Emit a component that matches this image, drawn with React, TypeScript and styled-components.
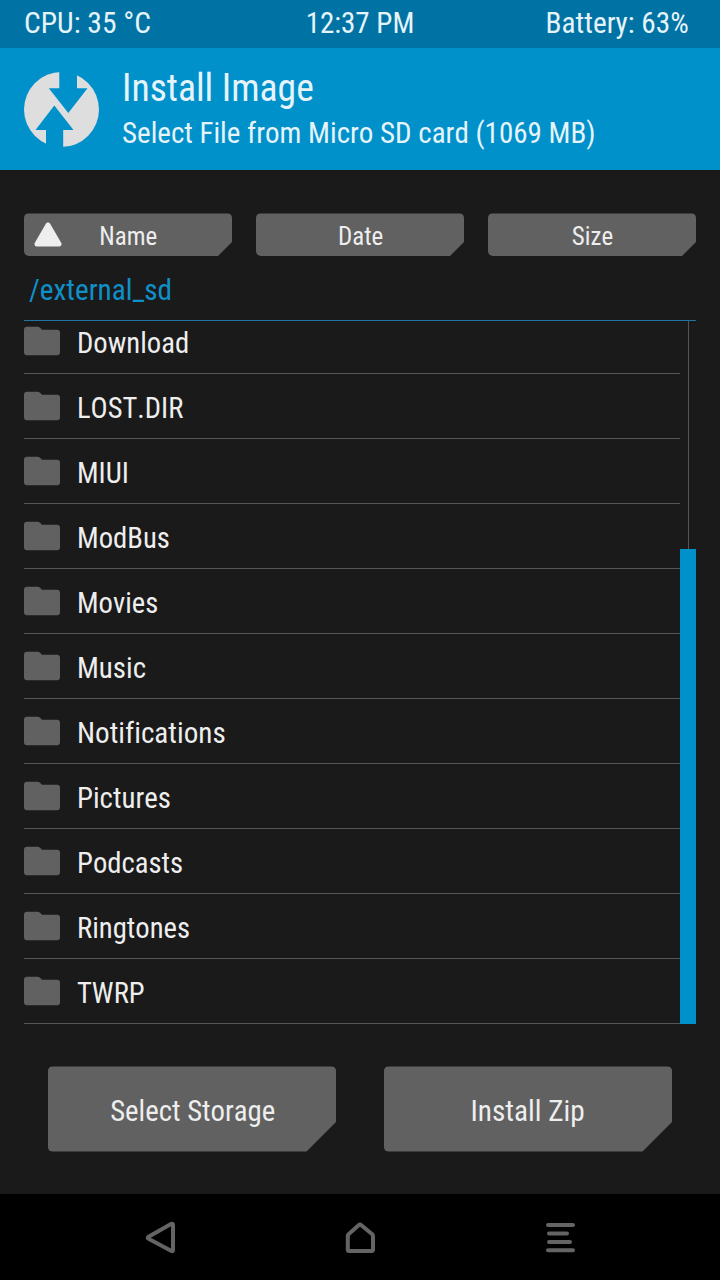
import React from "react";
import styled, { createGlobalStyle } from "styled-components";

const GlobalStyle = createGlobalStyle`
  * { box-sizing: border-box; }
  body {
    margin: 0;
    background: #1a1a1a;
    font-family: "Roboto Condensed", Roboto, "Liberation Sans", sans-serif;
    font-stretch: 75%;
    font-weight: 400;
    font-kerning: none;
    font-variant-ligatures: none;
    color: #eeeeee;
  }
`;

const Screen = styled.div`
  width: 720px;
  height: 1280px;
  display: flex;
  flex-direction: column;
  background: #1a1a1a;
  overflow: hidden;
`;

const Label = styled.span<{ $size?: number; $scale?: number; $origin?: string }>`
  display: block;
  white-space: nowrap;
  font-size: ${(p) => p.$size ?? 29}px;
  transform: scaleX(${(p) => p.$scale ?? 1});
  transform-origin: ${(p) => p.$origin ?? "left"} center;
`;

const StatusBar = styled.div`
  height: 48px;
  padding: 0 31px 2px 24px;
  display: grid;
  grid-template-columns: 1fr auto 1fr;
  align-items: center;
  background: #0073a4;
  color: #e6f4fa;
  & > :nth-child(2) { padding-left: 7px; }
  & > :last-child { justify-self: end; }
`;

const Header = styled.header`
  height: 122px;
  padding: 0 24px;
  display: flex;
  align-items: center;
  gap: 23px;
  background: #0090ca;
  color: #e6f4fa;
`;

const Logo = styled.svg`
  width: 75px;
  height: 75px;
  flex: none;
`;

const Titles = styled.div`
  display: flex;
  flex-direction: column;
  line-height: 46px;
  padding-top: 2px;
  & > :last-child { line-height: 44px; }
`;

const SortBar = styled.div`
  padding: 43px 24px 0;
  display: grid;
  grid-template-columns: repeat(3, 1fr);
  gap: 24px;
`;

const CutButton = styled.button<{ $height: number; $cut: number }>`
  position: relative;
  height: ${(p) => p.$height}px;
  padding: 4px 0 0;
  border: 0;
  border-radius: 5px;
  display: flex;
  align-items: center;
  justify-content: center;
  background: #616161;
  color: #eeeeee;
  font: inherit;
  clip-path: polygon(0 0.4px, 100% 0.4px, 100% calc(100% - ${(p) => p.$cut}px), calc(100% - ${(p) => p.$cut}px) 100%, 0 100%);
`;

const SortButton = styled(CutButton)`
  padding: 3px 0 0 1px;
`;

const SortArrow = styled.svg`
  position: absolute;
  left: 10px;
  top: 9px;
  width: 28px;
  height: 25px;
`;

const PathLine = styled.div`
  height: 65px;
  margin: 0 24px;
  padding: 1px 0 0 5px;
  border-bottom: 1px solid #1c76a0;
  color: #0f90c9;
  line-height: 66px;
`;

const FileArea = styled.div`
  height: 703px;
  margin: 0 24px;
  display: flex;
  overflow: hidden;
`;

const FileList = styled.ul`
  flex: 1;
  margin: -12px 0 0;
  padding: 0;
  list-style: none;
`;

const FileRow = styled.li`
  height: 65px;
  display: flex;
  align-items: center;
  gap: 17px;
  padding-top: 3px;
  border-bottom: 1px solid #555555;
`;

const FolderIcon = styled.svg`
  width: 36px;
  height: 30px;
  margin-bottom: 3px;
`;

const ScrollBar = styled.div`
  width: 16px;
  display: flex;
  flex-direction: column;
  align-items: center;
`;

const Track = styled.div`
  width: 1px;
  height: 228px;
  margin-left: 1px;
  background: #555555;
`;

const Thumb = styled.div`
  width: 16px;
  flex: 1;
  background: #0090ca;
`;

const Actions = styled.div`
  padding: 42px 48px 0;
  flex: 1;
  display: grid;
  grid-template-columns: 1fr 1fr;
  align-items: start;
  gap: 48px;
`;

const NavBar = styled.nav`
  height: 86px;
  padding: 0 144px;
  display: flex;
  justify-content: space-between;
  align-items: center;
  background: #000;
`;

const NavIcon = styled.svg`
  width: 32px;
  height: 36px;
  fill: none;
  stroke: #646464;
  stroke-width: 4;
  stroke-linecap: round;
  stroke-linejoin: round;
`;

const folders = [
  { name: "Download", scale: 0.988 },
  { name: "LOST.DIR", scale: 0.983 },
  { name: "MIUI", scale: 0.985 },
  { name: "ModBus", scale: 0.988 },
  { name: "Movies", scale: 0.986 },
  { name: "Music", scale: 0.997 },
  { name: "Notifications", scale: 1.005 },
  { name: "Pictures", scale: 0.995 },
  { name: "Podcasts", scale: 0.988 },
  { name: "Ringtones", scale: 0.988 },
  { name: "TWRP", scale: 0.985 },
];

export default function App() {
  return (
    <Screen>
      <GlobalStyle />
      <StatusBar>
        <Label $scale={1.018}>CPU: 35 °C</Label>
        <Label>12:37 PM</Label>
        <Label $scale={1.01} $origin="right">Battery: 63%</Label>
      </StatusBar>
      <Header>
        <Logo viewBox="24 72 75 75">
          <circle cx="61.5" cy="109.5" r="37.5" fill="#dedede" />
          <path fill="#0090ca" d="M59.3 70H77V88.3H87.5L68.3 113L48.8 88.3H59.3ZM54.3 105.5L73.5 130H63.2V149H46V130H35.5Z" />
        </Logo>
        <Titles>
          <Label $size={38} $scale={0.99}>Install Image</Label>
          <Label>Select File from Micro SD card (1069 MB)</Label>
        </Titles>
      </Header>
      <SortBar>
        {["Name", "Date", "Size"].map((name, i) => (
          <SortButton key={name} $height={43} $cut={14}>
            {i === 0 && (
              <SortArrow viewBox="0 0 28 25">
                <path d="M14 3L25 22H3Z" fill="#eee" stroke="#eee" strokeWidth="5" strokeLinejoin="round" />
              </SortArrow>
            )}
            <Label $size={26} $scale={0.96} $origin="center">{name}</Label>
          </SortButton>
        ))}
      </SortBar>
      <PathLine>
        <Label $scale={1.007}>/external_sd</Label>
      </PathLine>
      <FileArea>
        <FileList>
          {folders.map(({ name, scale }) => (
            <FileRow key={name}>
              <FolderIcon viewBox="0 0 36 30">
                <path fill="#616161" d="M3 .7H13.5Q15 .7 16 1.7L18 3.8H33Q36 3.8 36 6.8V26.3Q36 29.3 33 29.3H3Q0 29.3 0 26.3V3.7Q0 .7 3 .7Z" />
              </FolderIcon>
              <Label $scale={scale}>{name}</Label>
            </FileRow>
          ))}
        </FileList>
        <ScrollBar>
          <Track />
          <Thumb />
        </ScrollBar>
      </FileArea>
      <Actions>
        <CutButton $height={85.5} $cut={29.5}>
          <Label $scale={0.993} $origin="right">Select Storage</Label>
        </CutButton>
        <CutButton $height={85.5} $cut={29.5}>
          <Label $scale={1.01} $origin="center">Install Zip</Label>
        </CutButton>
      </Actions>
      <NavBar>
        <NavIcon viewBox="144 1219 32 36">
          <path d="M172 1223.8Q173 1223.5 173 1225V1250Q173 1251.8 171.5 1251L148.5 1238.7Q147 1237.6 148.5 1236.7L171 1224Z" />
        </NavIcon>
        <NavIcon viewBox="344 1219 32 36">
          <path d="M347.8 1236Q347.8 1235 348.6 1234.2L358.9 1225Q360 1224 361.1 1225L372.2 1234.2Q373 1235 373 1236V1249.5Q373 1251 371.5 1251H349.3Q347.8 1251 347.8 1249.5Z" />
        </NavIcon>
        <NavIcon viewBox="544 1219 32 36">
          <path d="M548 1225H573M549 1233.5H567M549 1242H570M548 1250.3H573" />
        </NavIcon>
      </NavBar>
    </Screen>
  );
}
